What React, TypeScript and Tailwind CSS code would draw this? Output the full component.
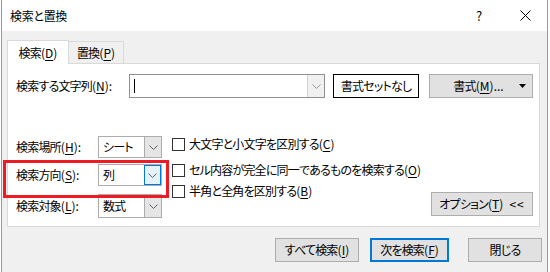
import React from 'react'

const font = { fontFamily: '"Noto Sans CJK JP", "Noto Sans", sans-serif' }

function Key({ k }: { k: string }) {
  return (
    <span className="tracking-normal">
      (<span className="underline underline-offset-2">{k}</span>)
    </span>
  )
}

function Chevron({ color = '#606060' }: { color?: string }) {
  return (
    <svg width="9" height="5" viewBox="0 0 9 5">
      <path d="M0.5 0.5 L4.5 4.5 L8.5 0.5" fill="none" stroke={color} strokeWidth="1" />
    </svg>
  )
}

function Select({ value, focus, h = 'h-[22px]' }: { value: string; focus?: boolean; h?: string }) {
  return (
    <div className={`w-[64px] ${h} flex border border-[#acacac] bg-white`}>
      <div className="flex-1 flex items-center pl-[4px] text-[12px]">{value}</div>
      <div
        className={
          focus
            ? 'w-[17px] flex items-center justify-center border border-[#0078d7] bg-[#e5f1fb]'
            : 'w-[17px] flex items-center justify-center border-l border-[#acacac] bg-[#e5e5e5]'
        }
      >
        <Chevron />
      </div>
    </div>
  )
}

function Check({ children }: { children: React.ReactNode }) {
  return (
    <div className="flex items-center h-[14px]">
      <div className="w-[13px] h-[13px] border border-[#333] bg-white shrink-0" />
      <span className="ml-[4px] text-[12px] leading-none">{children}</span>
    </div>
  )
}

export default function App() {
  return (
    <div
      className="w-[550px] h-[272px] bg-white relative overflow-hidden text-black tracking-[-0.8px] [font-feature-settings:'palt']"
      style={font}
    >
      <div className="ml-[1px] w-[547px] h-full border-l border-r border-[#9a9a9a] flex flex-col">
        {/* title bar */}
        <div className="h-[31px] shrink-0 bg-white flex items-center pl-[8px]">
          <span className="text-[12px] tracking-[-0.3px]">検索と置換</span>
          <div className="flex-1" />
          <span className="text-[13px] w-[10px] mr-[34px]">?</span>
          <svg width="11" height="11" viewBox="0 0 11 11" className="mr-[16px]">
            <path d="M0.5 0.5 L10.5 10.5 M10.5 0.5 L0.5 10.5" stroke="#000" strokeWidth="1" />
          </svg>
        </div>

        {/* body */}
        <div className="flex-1 bg-[#f0f0f0] pl-[5px] pt-[8px]">
          {/* tabs */}
          <div className="flex items-end h-[24px]">
            <div className="w-[62px] h-[24px] bg-white border border-b-0 border-[#d9d9d9] flex items-center justify-center text-[12px] relative top-[1px]">
              検索<Key k="D" />
            </div>
            <div className="w-[55px] h-[22px] bg-[#f0f0f0] border border-b-0 border-l-0 border-[#d9d9d9] flex items-center justify-center text-[12px]">
              置換<Key k="P" />
            </div>
          </div>

          {/* panel */}
          <div className="w-[533px] h-[164px] bg-white border border-[#d9d9d9] pl-[8px] pt-[10px]">
            <div className="flex items-center h-[24px]">
              <span className="w-[113px] text-[12px]">
                検索する文字列<Key k="N" />:
              </span>
              <div className="w-[196px] h-[24px] flex border border-[#8f8f8f] bg-white">
                <div className="flex-1 flex items-center pl-[4px]">
                  <div className="w-[1px] h-[14px] bg-black" />
                </div>
                <div className="w-[17px] flex items-center justify-center border-l border-[#d0d0d0] bg-[#f0f0f0]">
                  <Chevron color="#9a9a9a" />
                </div>
              </div>
              <div className="ml-[8px] w-[86px] h-[24px] border border-black bg-white flex items-center justify-center text-[12px]">
                書式セットなし
              </div>
              <div className="ml-[10px] w-[104px] h-[24px] border border-[#adadad] bg-[#e1e1e1] flex items-center text-[12px]">
                <span className="flex-1 text-center pl-[8px]">
                  書式<Key k="M" />
                  <span className="tracking-normal">...</span>
                </span>
                <svg width="7" height="4" viewBox="0 0 7 4" className="mr-[6px]">
                  <path d="M0 0 L7 0 L3.5 4 Z" fill="#000" />
                </svg>
              </div>
            </div>

            <div className="flex mt-[38px]">
              {/* left column */}
              <div className="flex flex-col">
                <div className="flex items-center h-[22px]">
                  <span className="w-[82px] text-[12px]">
                    検索場所<Key k="H" />:
                  </span>
                  <Select value="シート" />
                </div>
                <div className="flex items-center h-[22px] mt-[6px]">
                  <span className="w-[82px] text-[12px]">
                    検索方向<Key k="S" />:
                  </span>
                  <Select value="列" focus />
                </div>
                <div className="flex items-center h-[24px] mt-[8px]">
                  <span className="w-[82px] text-[12px]">
                    検索対象<Key k="L" />:
                  </span>
                  <Select value="数式" h="h-[24px]" />
                </div>
              </div>

              {/* right column */}
              <div className="flex-1 flex flex-col pl-[10px] pt-[1px] pr-[6px]">
                <Check>
                  大文字と小文字を区別する<Key k="C" />
                </Check>
                <div className="mt-[12px]">
                  <Check>
                    セル内容が完全に同一であるものを検索する<Key k="O" />
                  </Check>
                </div>
                <div className="mt-[7px]">
                  <Check>
                    半角と全角を区別する<Key k="B" />
                  </Check>
                </div>
                <div className="flex justify-end -mt-[6px]">
                  <div className="w-[102px] h-[24px] border border-[#adadad] bg-[#e1e1e1] flex items-center justify-center text-[12px]">
                    オプション<Key k="T" />
                    <span className="ml-[6px] tracking-[1px]">&lt;&lt;</span>
                  </div>
                </div>
              </div>
            </div>
          </div>

          {/* bottom buttons */}
          <div className="flex justify-end mt-[11px] pr-[5px]">
            <div className="w-[84px] h-[24px] border border-[#adadad] bg-[#e1e1e1] flex items-center justify-center text-[12px]">
              すべて検索<Key k="I" />
            </div>
            <div className="ml-[11px] w-[79px] h-[24px] border-2 border-[#0078d7] bg-[#e1e1e1] flex items-center justify-center text-[12px]">
              次を検索<Key k="F" />
            </div>
            <div className="ml-[19px] w-[74px] h-[24px] border border-[#adadad] bg-[#e1e1e1] flex items-center justify-center text-[12px]">
              閉じる
            </div>
          </div>
        </div>
      </div>

      {/* red annotation box */}
      <div className="absolute left-[3px] top-[160px] w-[166px] h-[38px] border-[3px] border-[#ed1c24]" />
    </div>
  )
}
